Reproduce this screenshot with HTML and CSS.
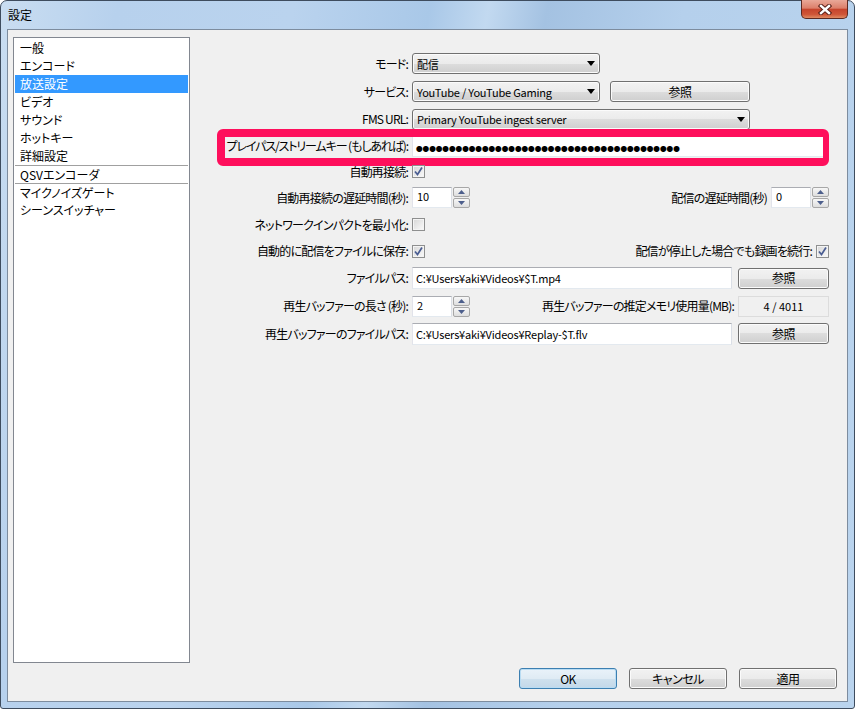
FILE: index.html
```html
<!DOCTYPE html>
<html lang="ja">
<head>
  <meta charset="UTF-8">
  <title>設定</title>
  <link rel="stylesheet" href="styles.css">
</head>
<body>
  <div class="window">
    <div class="titlebar">
      <span class="title">設定</span>
      <div class="close-button">
        <svg width="14" height="11" viewBox="0 0 14 11">
          <path d="M3 2 L11 9 M11 2 L3 9" stroke="#5a2018" stroke-width="4.4" stroke-linecap="square" fill="none"/>
          <path d="M3 2 L11 9 M11 2 L3 9" stroke="#fff" stroke-width="2.4" stroke-linecap="square" fill="none"/>
        </svg>
      </div>
    </div>

    <div class="client">
      <div class="main">
        <!-- Settings pages -->
        <ul class="nav">
          <li>一般</li>
          <li>エンコード</li>
          <li class="selected">放送設定</li>
          <li>ビデオ</li>
          <li>サウンド</li>
          <li>ホットキー</li>
          <li>詳細設定</li>
          <li class="group">QSVエンコーダ</li>
          <li class="group">マイクノイズゲート</li>
          <li>シーンスイッチャー</li>
        </ul>

        <!-- Broadcast settings -->
        <div class="form">
          <div class="row">
            <span class="label">モード:</span>
            <div class="combo"><span>配信</span><svg class="arrow" width="8" height="5" viewBox="0 0 8 5"><path d="M0 0 H8 L4 5 Z"/></svg></div>
          </div>

          <div class="row">
            <span class="label">サービス:</span>
            <div class="combo"><span>YouTube / YouTube Gaming</span><svg class="arrow" width="8" height="5" viewBox="0 0 8 5"><path d="M0 0 H8 L4 5 Z"/></svg></div>
            <button class="btn btn-service">参照</button>
          </div>

          <div class="row">
            <span class="label">FMS URL:</span>
            <div class="combo combo-wide"><span>Primary YouTube ingest server</span><svg class="arrow" width="8" height="5" viewBox="0 0 8 5"><path d="M0 0 H8 L4 5 Z"/></svg></div>
          </div>

          <div class="row">
            <span class="label label-key">プレイパス/ストリームキー (もしあれば):</span>
            <div class="field"><span class="secret">●●●●●●●●●●●●●●●●●●●●●●●●●●●●●●●●●●●●●●●●</span></div>
            <div class="highlight"></div>
          </div>

          <div class="row">
            <span class="label">自動再接続:</span>
            <span class="check"><svg width="11" height="11" viewBox="0 0 11 11"><path d="M2 5.5 L4.5 8.5 L9 1.5" stroke="#4a5d92" stroke-width="1.7" fill="none"/></svg></span>
          </div>

          <div class="row">
            <span class="label">自動再接続の遅延時間(秒):</span>
            <div class="spin">
              <span class="spin-field">10</span>
              <span class="spin-buttons">
                <span class="spin-btn"><svg width="7" height="4" viewBox="0 0 7 4"><path d="M0 4 H7 L3.5 0 Z"/></svg></span>
                <span class="spin-btn"><svg width="7" height="4" viewBox="0 0 7 4"><path d="M0 0 H7 L3.5 4 Z"/></svg></span>
              </span>
            </div>
            <span class="label-side">配信の遅延時間(秒)</span>
            <div class="spin">
              <span class="spin-field">0</span>
              <span class="spin-buttons">
                <span class="spin-btn"><svg width="7" height="4" viewBox="0 0 7 4"><path d="M0 4 H7 L3.5 0 Z"/></svg></span>
                <span class="spin-btn"><svg width="7" height="4" viewBox="0 0 7 4"><path d="M0 0 H7 L3.5 4 Z"/></svg></span>
              </span>
            </div>
          </div>

          <div class="row">
            <span class="label">ネットワークインパクトを最小化:</span>
            <span class="check"></span>
          </div>

          <div class="row">
            <span class="label">自動的に配信をファイルに保存:</span>
            <span class="check"><svg width="11" height="11" viewBox="0 0 11 11"><path d="M2 5.5 L4.5 8.5 L9 1.5" stroke="#4a5d92" stroke-width="1.7" fill="none"/></svg></span>
            <span class="label-side">配信が停止した場合でも録画を続行:</span>
            <span class="check"><svg width="11" height="11" viewBox="0 0 11 11"><path d="M2 5.5 L4.5 8.5 L9 1.5" stroke="#4a5d92" stroke-width="1.7" fill="none"/></svg></span>
          </div>

          <div class="row">
            <span class="label">ファイルパス:</span>
            <div class="field field-path">C:¥Users¥aki¥Videos¥$T.mp4</div>
            <button class="btn btn-browse">参照</button>
          </div>

          <div class="row">
            <span class="label">再生バッファーの長さ (秒):</span>
            <div class="spin">
              <span class="spin-field">2</span>
              <span class="spin-buttons">
                <span class="spin-btn"><svg width="7" height="4" viewBox="0 0 7 4"><path d="M0 4 H7 L3.5 0 Z"/></svg></span>
                <span class="spin-btn"><svg width="7" height="4" viewBox="0 0 7 4"><path d="M0 0 H7 L3.5 4 Z"/></svg></span>
              </span>
            </div>
            <span class="label-side">再生バッファーの推定メモリ使用量(MB):</span>
            <div class="readout">4 / 4011</div>
          </div>

          <div class="row">
            <span class="label">再生バッファーのファイルパス:</span>
            <div class="field field-path">C:¥Users¥aki¥Videos¥Replay-$T.flv</div>
            <button class="btn btn-browse">参照</button>
          </div>
        </div>
      </div>

      <div class="actions">
        <button class="btn btn-default">OK</button>
        <button class="btn">キャンセル</button>
        <button class="btn">適用</button>
      </div>
    </div>
  </div>
</body>
</html>
```

FILE: styles.css
```css
body {
  margin: 0;
  width: 855px;
  height: 709px;
  overflow: hidden;
  background: #fff;
  font-family: "Noto Sans CJK JP", sans-serif;
  font-size: 12px;
  font-feature-settings: "palt";
  color: #000;
}

/* Window frame */
.window {
  box-sizing: border-box;
  width: 855px;
  height: 709px;
  border: 1px solid #3e4c5e;
  border-radius: 7px 7px 3px 3px;
  background: linear-gradient(100deg, #c9ddf1 0%, #b7d1ed 12%, #bad3ee 30%, #a9c8e8 44%, #c2d9f0 50%, #a4c2e2 56%, #b5d0ec 70%, #bad4ee 100%);
  display: flex;
  flex-direction: column;
}

.titlebar {
  height: 28px;
  flex: none;
  display: flex;
  justify-content: space-between;
  align-items: flex-start;
}

.title {
  padding: 7px 0 0 7px;
  line-height: 14px;
}

.close-button {
  box-sizing: border-box;
  width: 47px;
  height: 19px;
  margin: -1px 6px 0 0;
  border: 1px solid #5c2a22;
  border-top: none;
  border-radius: 0 0 5px 5px;
  background: linear-gradient(#e9a898 0%, #dc7f6a 45%, #c6452d 52%, #cf5638 80%, #e08a62 100%);
  display: flex;
  align-items: center;
  justify-content: center;
}

.client {
  flex: 1;
  min-height: 0;
  margin: 0 6px 6px 6px;
  border: 1px solid #7d8c9e;
  background: #f0f0f0;
  display: flex;
  flex-direction: column;
}

.main {
  height: 633px;
  flex: none;
  display: flex;
  align-items: flex-start;
}

/* Page list */
.nav {
  list-style: none;
  box-sizing: border-box;
  width: 177px;
  height: 626px;
  margin: 7px 0 0 5px;
  padding: 1px 0;
  border: 1px solid #828790;
  background: #fff;
  flex: none;
}

.nav li {
  box-sizing: border-box;
  height: 18px;
  line-height: 18px;
  margin: 0 1px;
  padding-left: 5px;
}

.nav li.group {
  border-top: 1px solid #a0a0a0;
  line-height: 17px;
}

.nav li.selected {
  background: #3399ff;
  color: #fff;
}

/* Form */
.form {
  flex: 1;
  padding: 19px 18px 0 10px;
  display: grid;
  grid-template-rows: 29px 27px 28px 26px 25px 27px 27px 26px 28px 28px 27px;
}

.row {
  position: relative;
  display: flex;
  align-items: center;
}

.label {
  flex: none;
  box-sizing: border-box;
  width: 212px;
  padding-right: 4px;
  text-align: right;
  white-space: nowrap;
  line-height: 14px;
  letter-spacing: -0.8px;
}

.label-key {
  letter-spacing: -1.1px;
}

.label-side {
  margin-left: auto;
  padding-right: 4px;
  white-space: nowrap;
  line-height: 14px;
  letter-spacing: -0.8px;
}

.combo {
  box-sizing: border-box;
  width: 188px;
  height: 21px;
  padding: 0 4px 0 4px;
  border: 1px solid #707070;
  border-radius: 3px;
  background: linear-gradient(#f2f2f2 0%, #ebebeb 50%, #dddddd 50%, #cfcfcf 100%);
  box-shadow: inset 0 0 0 1px #fbfbfb;
  display: flex;
  align-items: center;
  justify-content: space-between;
  font-size: 11px;
  letter-spacing: -0.2px;
  line-height: 14px;
}

.combo-wide {
  width: 338px;
}

.arrow {
  fill: #000;
}

.field {
  box-sizing: border-box;
  flex: 1;
  height: 21px;
  padding-left: 3px;
  border: 1px solid;
  border-color: #abadb3 #dbdfe6 #e3e9ef #e2e3ea;
  background: #fff;
  font-size: 11px;
  letter-spacing: -0.2px;
  line-height: 19px;
  white-space: nowrap;
  overflow: hidden;
}

.field-path {
  height: 22px;
  line-height: 20px;
}

.secret {
  font-size: 6.6px;
  font-feature-settings: normal;
  letter-spacing: 0;
  line-height: 19px;
}

.highlight {
  position: absolute;
  left: 17px;
  right: 0;
  top: -4px;
  bottom: -7px;
  border: solid #fe0f5c;
  border-width: 8px 6px 8px 8px;
  border-radius: 6px;
  pointer-events: none;
}

/* Checkbox */
.check {
  box-sizing: border-box;
  width: 13px;
  height: 13px;
  flex: none;
  border: 1px solid #8e8f8f;
  background: linear-gradient(135deg, #d6d6d6, #fbfbfb);
  box-shadow: inset 0 0 0 1px #f4f4f4;
  display: flex;
  align-items: center;
  justify-content: center;
}

/* Spin box */
.spin {
  width: 58px;
  height: 21px;
  flex: none;
  display: flex;
}

.spin-field {
  box-sizing: border-box;
  flex: 1;
  padding: 1px 0 0 4px;
  border: 1px solid;
  border-color: #abadb3 #dbdfe6 #e3e9ef #e2e3ea;
  background: #fff;
  font-size: 11px;
  line-height: 15px;
}

.spin-buttons {
  width: 17px;
  padding-left: 1px;
  display: flex;
  flex-direction: column;
  gap: 1px;
}

.spin-btn {
  flex: 1;
  border: 1px solid #a7a7a7;
  border-radius: 2px;
  background: linear-gradient(#f7f7f7, #dedede);
  display: flex;
  align-items: center;
  justify-content: center;
  fill: #4d5f8c;
}

.readout {
  box-sizing: border-box;
  width: 91px;
  height: 21px;
  border: 1px solid #dcdcdc;
  text-align: center;
  font-size: 11px;
  line-height: 19px;
}

/* Buttons */
.btn {
  box-sizing: border-box;
  width: 98px;
  height: 21px;
  padding: 0;
  border: 1px solid #707070;
  border-radius: 3px;
  background: linear-gradient(#f2f2f2 0%, #ebebeb 50%, #dddddd 50%, #cfcfcf 100%);
  box-shadow: inset 0 0 0 1px #fbfbfb;
  font-family: inherit;
  font-size: 12px;
  font-feature-settings: "palt";
  letter-spacing: -0.5px;
  line-height: 14px;
  color: #000;
}

.btn-service {
  width: 140px;
  margin-left: 10px;
}

.btn-browse {
  width: 91px;
  margin-left: 6px;
}

.btn-default {
  border-color: #3c7fb1;
  background: linear-gradient(#e9f2f9 0%, #dfebf4 50%, #cfe1ee 50%, #c3d8e9 100%);
  box-shadow: inset 0 0 0 1px #b9dcf3;
}

.actions {
  margin-top: 5px;
  padding-right: 10px;
  display: flex;
  justify-content: flex-end;
  gap: 12px;
}
```
